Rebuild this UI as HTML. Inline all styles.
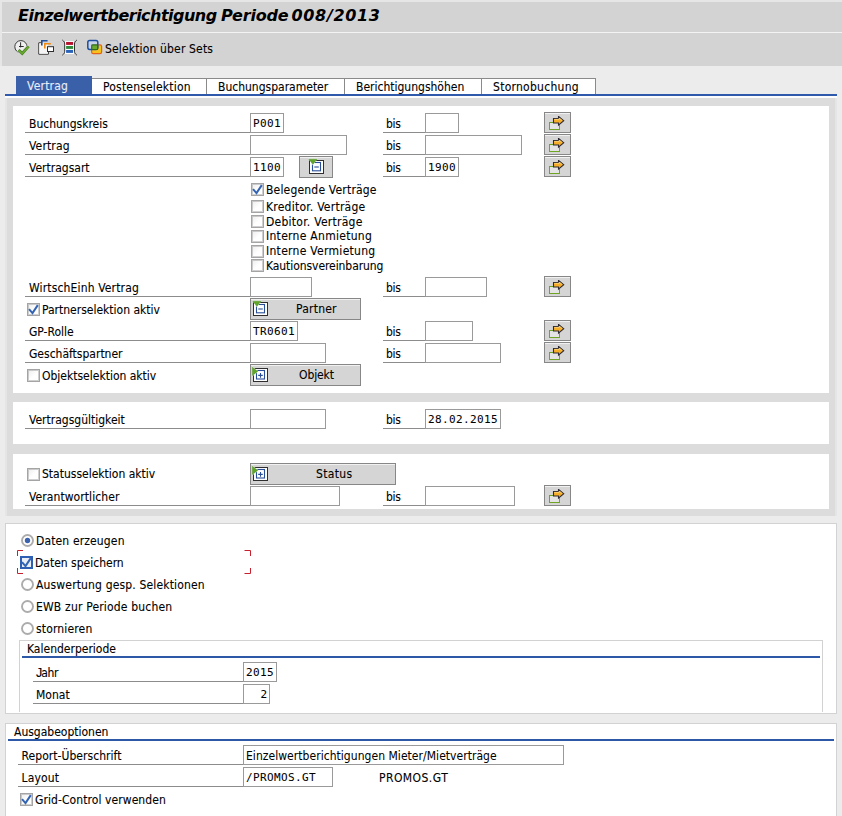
<!DOCTYPE html>
<html lang="de">
<head>
<meta charset="utf-8">
<title>Einzelwertberichtigung Periode 008/2013</title>
<style>
html,body{margin:0;padding:0;}
body{width:842px;height:816px;position:relative;overflow:hidden;background:#ececec;
 font-family:"DejaVu Sans Condensed","Liberation Sans",sans-serif;font-size:12px;color:#000;-webkit-text-stroke-width:0.1px;}
#root div,#root span,#root svg,#root i{position:absolute;white-space:nowrap;}
#titlebar{left:0;top:0;width:842px;height:32px;background:#d3d3d3;}
#title{left:18px;top:6px;font:italic bold 16px "DejaVu Sans","Liberation Sans",sans-serif;line-height:20px;-webkit-text-stroke-width:0;}
#title span{top:0;white-space:pre;}
#toolbar{left:0;top:33px;width:842px;height:33px;background:#d3d3d3;}
.t{line-height:14px;height:14px;}
.lbl{height:19px;border-bottom:1px solid #8c8c8c;line-height:19px;}
.lbl span{top:2px;}
.inp{box-sizing:border-box;height:20px;border:1px solid #9a9a9a;background:#fff;font:11px "DejaVu Sans Mono","Liberation Mono",monospace;letter-spacing:0.38px;line-height:18px;-webkit-text-stroke-width:0.05px;}
.inp span{left:2px;top:1px;}
.btn{box-sizing:border-box;background:#d5d5d5;border:1px solid #878787;box-shadow:inset 0 1px 0 #f1f1f1;}
.bt{top:0;line-height:20px;}
.white{background:#fff;}
.cb{box-sizing:border-box;width:13px;height:13px;border:1px solid #a4a4a4;background:linear-gradient(135deg,#ececec 0%,#fff 55%);box-shadow:inset 0 0 0 1px rgba(160,160,160,.5);}
.cbf{border:2px solid #2f5fb2;box-shadow:none;background:#e9eef7;}
.cbf svg{left:-2px !important;top:-2px !important;}
.tab{top:78px;height:16px;background:#fff;border-top:1px solid #8a8a8a;border-right:1px solid #8a8a8a;box-sizing:border-box;}
.tab span{left:11px;top:1px;line-height:15px;}
.tab.act{top:76px;height:18px;background:#3a60aa;border:none;color:#e8eefa;}
.tab.act span{left:11px;top:1px;line-height:19px;}
#tabline{left:5px;top:94px;width:832px;height:2px;background:#2f5aab;}
#tabstrip{left:5px;top:96px;width:832px;height:2px;background:#fcfcfc;}
#panel{left:5px;top:98px;width:832px;height:418px;background:#dcdcdc;box-sizing:border-box;border-left:2px solid #e5e5e5;border-right:2px solid #e5e5e5;}
.frame{box-sizing:border-box;background:#fff;border:1px solid #d2d2d2;}
.grp{box-sizing:border-box;border:1px solid #d2d2d2;border-bottom:none;}
.bl{height:2px;background:#2d57a7;}
#tbl{left:0;top:0;width:2px;height:66px;background:#e6e6e6;}
#tbt{left:0;top:0;width:842px;height:2px;background:#e6e6e6;}
#tbm{left:0;top:32px;width:842px;height:1px;background:#f3f3f3;}
.lbl em{font-style:normal;font-family:"Liberation Sans",sans-serif;font-size:12.5px;letter-spacing:-1.1px;}

</style>
</head>
<body>
<div id="root">
<div id="titlebar"><div id="title"><span style="left:0;letter-spacing:-0.515px">Einzelwertberichtigung </span><span style="left:203px;letter-spacing:-0.2px">Periode </span><span style="left:273.5px;letter-spacing:0.66px">008/2013</span></div></div>
<div id="toolbar">
<svg width="20" height="20" viewBox="0 0 20 20" style="left:12px;top:5px">
<circle cx="8.9" cy="8.7" r="6.1" fill="#efefef" stroke="#3a3a3a" stroke-width="1"/>
<path d="M8.6 4.3 V9.4 M7 8.5 H11.7" stroke="#2a2a2a" stroke-width="1" fill="none"/>
<path d="M6.6 12.1 L10.2 15.5 L16.6 8.4" fill="none" stroke="#d3d3d3" stroke-width="4"/>
<path d="M6.6 12.1 L10.2 15.5 L16.6 8.4" fill="none" stroke="#437f1c" stroke-width="2.7"/>
<path d="M6.6 12.1 L10.2 15.5 L16.6 8.4" fill="none" stroke="#6cab30" stroke-width="1.5"/>
</svg>
<svg width="20" height="20" viewBox="0 0 20 20" style="left:36px;top:5px">
<path d="M5.2 4.8 H2.8 V16.2 H12.4 V13.6" fill="#f6f6f6" stroke="#2e2e2e" stroke-width="1"/>
<rect x="3.3" y="5.3" width="8.6" height="10.4" fill="#f4f4f4"/>
<path d="M5.8 7.4 V2.8 H11.6" fill="none" stroke="#1f4e9c" stroke-width="1.6"/>
<path d="M8.8 10.6 V5.8 H14.8" fill="none" stroke="#f08a10" stroke-width="1.6"/>
<rect x="11.5" y="8.7" width="6" height="4.8" fill="#fff" stroke="#2e2e2e" stroke-width="1"/>
</svg>
<svg width="20" height="20" viewBox="0 0 20 20" style="left:60px;top:5px">
<rect x="5" y="3.2" width="9.2" height="12.8" fill="#fff"/>
<path d="M2.3 2 C4.2 3.4 4.7 4.4 4.7 6 V13.2 C4.7 14.8 4.2 15.8 2.3 17.2" fill="none" stroke="#333" stroke-width="1"/>
<path d="M16.9 2 C15 3.4 14.5 4.4 14.5 6 V13.2 C14.5 14.8 15 15.8 16.9 17.2" fill="none" stroke="#333" stroke-width="1"/>
<rect x="6.1" y="4" width="7" height="2.9" fill="#b5132d"/>
<rect x="6.1" y="8" width="7" height="2.9" fill="#2f8a3a"/>
<rect x="6.1" y="12" width="7" height="2.9" fill="#2a62b8"/>
</svg>
<svg width="20" height="20" viewBox="0 0 20 20" style="left:85px;top:5px">
<rect x="6.6" y="6.8" width="10" height="8.8" rx="1.6" fill="#f7c21c" stroke="#e0641a" stroke-width="1.2"/>
<rect x="2.8" y="2.6" width="10" height="8.8" rx="1.8" fill="#c8d2e8" stroke="#1f4f9f" stroke-width="1.5"/>
<rect x="6.7" y="6.9" width="6" height="4.6" rx="0.8" fill="#6aa82e" stroke="#2d6a1e" stroke-width="1.1"/>
</svg>
<div class="t" style="left:105px;top:9px;letter-spacing:0.16px">Selektion über Sets</div></div>
<div id="tbt"></div><div id="tbm"></div>
<div id="tbl"></div>
<div id="tabline"></div>
<div class="tab act" style="left:16px;width:76px"><span style="letter-spacing:0.2px">Vertrag</span></div>
<div class="tab" style="left:92px;width:115px"><span style="letter-spacing:0.19px;">Postenselektion</span></div>
<div class="tab" style="left:207px;width:138px"><span style="">Buchungsparameter</span></div>
<div class="tab" style="left:345px;width:137px"><span style="">Berichtigungshöhen</span></div>
<div class="tab" style="left:482px;width:114px"><span style="letter-spacing:0.27px;">Stornobuchung</span></div>
<div id="tabstrip"></div>
<div id="panel"></div>
<div class="white" style="left:13px;top:106px;width:816px;height:287px"></div>
<div class="white" style="left:13px;top:402px;width:816px;height:42px"></div>
<div class="white" style="left:13px;top:454px;width:816px;height:55px"></div>
<div class="lbl" style="left:25px;top:113px;width:225px"><span style="left:4px;">Buchungskreis</span></div>
<div class="inp " style="left:250px;top:113px;width:34px"><span>P001</span></div>
<div class="lbl" style="left:383px;top:113px;width:42px"><span style="left:3px;letter-spacing:-0.3px;">bis</span></div>
<div class="inp " style="left:425px;top:113px;width:34px"></div>
<div class="btn" style="left:544px;top:112px;width:27px;height:21px"><svg width="18" height="15" viewBox="0 0 18 15" style="left:3px;top:3px"><rect x="1.5" y="6.5" width="10" height="7" fill="#e4e4e4" stroke="#6ea524" stroke-width="1"/><path d="M5.5 2.5 H10.5 V0.4 L15.7 4.7 L10.5 9.1 V7 H5.5 Z" fill="#f6ae28" stroke="#2e2a33" stroke-width="1.1" stroke-linejoin="miter"/><path d="M6.3 3.4 H11.2 V2.2 L14.2 4.6" fill="none" stroke="#fbd277" stroke-width="0.9"/></svg></div>
<div class="lbl" style="left:25px;top:135px;width:225px"><span style="left:4px;letter-spacing:0.15px;">Vertrag</span></div>
<div class="inp " style="left:250px;top:135px;width:97px"></div>
<div class="lbl" style="left:383px;top:135px;width:42px"><span style="left:3px;letter-spacing:-0.3px;">bis</span></div>
<div class="inp " style="left:425px;top:135px;width:97px"></div>
<div class="btn" style="left:544px;top:134px;width:27px;height:21px"><svg width="18" height="15" viewBox="0 0 18 15" style="left:3px;top:3px"><rect x="1.5" y="6.5" width="10" height="7" fill="#e4e4e4" stroke="#6ea524" stroke-width="1"/><path d="M5.5 2.5 H10.5 V0.4 L15.7 4.7 L10.5 9.1 V7 H5.5 Z" fill="#f6ae28" stroke="#2e2a33" stroke-width="1.1" stroke-linejoin="miter"/><path d="M6.3 3.4 H11.2 V2.2 L14.2 4.6" fill="none" stroke="#fbd277" stroke-width="0.9"/></svg></div>
<div class="lbl" style="left:25px;top:157px;width:225px"><span style="left:4px;">Vertragsart</span></div>
<div class="inp " style="left:250px;top:157px;width:34px"><span>1100</span></div>
<div class="lbl" style="left:383px;top:157px;width:42px"><span style="left:3px;letter-spacing:-0.3px;">bis</span></div>
<div class="inp " style="left:425px;top:157px;width:34px"><span>1900</span></div>
<div class="btn" style="left:544px;top:156px;width:27px;height:21px"><svg width="18" height="15" viewBox="0 0 18 15" style="left:3px;top:3px"><rect x="1.5" y="6.5" width="10" height="7" fill="#e4e4e4" stroke="#6ea524" stroke-width="1"/><path d="M5.5 2.5 H10.5 V0.4 L15.7 4.7 L10.5 9.1 V7 H5.5 Z" fill="#f6ae28" stroke="#2e2a33" stroke-width="1.1" stroke-linejoin="miter"/><path d="M6.3 3.4 H11.2 V2.2 L14.2 4.6" fill="none" stroke="#fbd277" stroke-width="0.9"/></svg></div>
<div class="btn" style="left:299px;top:156px;width:34px;height:22px"><svg width="18" height="17" viewBox="0 0 18 17" style="left:8px;top:1px">
<rect x="1.5" y="2.5" width="14" height="13" fill="#fff" stroke="#2f2f2f" stroke-width="1"/>
<rect x="4.5" y="4.5" width="8" height="8.3" fill="#fff" stroke="#2a4f9a" stroke-width="1.1"/>
<path d="M6.3 9 H10.8" stroke="#2a4f9a" stroke-width="1.1"/>
<path d="M0.2 0.5 H9.6 L4.9 7.2 Z" fill="#fff"/>
<path d="M0.9 1.2 H8.9 L4.9 6.3 Z" fill="#5fa52a" stroke="#4a8a1f" stroke-width="0.5"/>
</svg></div>
<div class="cb" style="left:251px;top:183px"><svg class="ck" width="13" height="13" viewBox="0 0 13 13" style="left:-1px;top:-1px"><path d="M2 6.1 L5.5 10.1 L10.8 2.1" fill="none" stroke="#3364b4" stroke-width="2" stroke-linecap="butt"/></svg></div>
<div class="t" style="left:266px;top:183px;letter-spacing:0.19px;">Belegende Verträge</div>
<div class="cb" style="left:251px;top:200px"></div>
<div class="t" style="left:266px;top:200px;letter-spacing:0.24px;">Kreditor. Verträge</div>
<div class="cb" style="left:251px;top:215px"></div>
<div class="t" style="left:266px;top:215px;letter-spacing:0.26px;">Debitor. Verträge</div>
<div class="cb" style="left:251px;top:230px"></div>
<div class="t" style="left:266px;top:229px;letter-spacing:0.29px;">Interne Anmietung</div>
<div class="cb" style="left:251px;top:245px"></div>
<div class="t" style="left:266px;top:244px;letter-spacing:0.29px;">Interne Vermietung</div>
<div class="cb" style="left:251px;top:259px"></div>
<div class="t" style="left:266px;top:259px;letter-spacing:-0.07px;">Kautionsvereinbarung</div>
<div class="lbl" style="left:25px;top:277px;width:225px"><span style="left:4px;letter-spacing:0.15px;">WirtschEinh Vertrag</span></div>
<div class="inp " style="left:250px;top:277px;width:62px"></div>
<div class="lbl" style="left:383px;top:277px;width:42px"><span style="left:3px;letter-spacing:-0.3px;">bis</span></div>
<div class="inp " style="left:425px;top:277px;width:62px"></div>
<div class="btn" style="left:544px;top:276px;width:27px;height:21px"><svg width="18" height="15" viewBox="0 0 18 15" style="left:3px;top:3px"><rect x="1.5" y="6.5" width="10" height="7" fill="#e4e4e4" stroke="#6ea524" stroke-width="1"/><path d="M5.5 2.5 H10.5 V0.4 L15.7 4.7 L10.5 9.1 V7 H5.5 Z" fill="#f6ae28" stroke="#2e2a33" stroke-width="1.1" stroke-linejoin="miter"/><path d="M6.3 3.4 H11.2 V2.2 L14.2 4.6" fill="none" stroke="#fbd277" stroke-width="0.9"/></svg></div>
<div class="cb" style="left:27px;top:303px"><svg class="ck" width="13" height="13" viewBox="0 0 13 13" style="left:-1px;top:-1px"><path d="M2 6.1 L5.5 10.1 L10.8 2.1" fill="none" stroke="#3364b4" stroke-width="2" stroke-linecap="butt"/></svg></div>
<div class="t" style="left:42px;top:303px;">Partnerselektion aktiv</div>
<div class="btn" style="left:250px;top:298px;width:111px;height:22px"><svg width="18" height="17" viewBox="0 0 18 17" style="left:1px;top:1px">
<rect x="1.5" y="2.5" width="14" height="13" fill="#fff" stroke="#2f2f2f" stroke-width="1"/>
<rect x="4.5" y="4.5" width="8" height="8.3" fill="#fff" stroke="#2a4f9a" stroke-width="1.1"/>
<path d="M6.3 9 H10.8" stroke="#2a4f9a" stroke-width="1.1"/>
<path d="M0.2 0.5 H9.6 L4.9 7.2 Z" fill="#fff"/>
<path d="M0.9 1.2 H8.9 L4.9 6.3 Z" fill="#5fa52a" stroke="#4a8a1f" stroke-width="0.5"/>
</svg><span class="bt" style="left:45px;letter-spacing:0.23px">Partner</span></div>
<div class="lbl" style="left:25px;top:321px;width:225px"><span style="left:4px;">GP-Rolle</span></div>
<div class="inp " style="left:250px;top:321px;width:48px"><span>TR0601</span></div>
<div class="lbl" style="left:383px;top:321px;width:42px"><span style="left:3px;letter-spacing:-0.3px;">bis</span></div>
<div class="inp " style="left:425px;top:321px;width:48px"></div>
<div class="btn" style="left:544px;top:320px;width:27px;height:21px"><svg width="18" height="15" viewBox="0 0 18 15" style="left:3px;top:3px"><rect x="1.5" y="6.5" width="10" height="7" fill="#e4e4e4" stroke="#6ea524" stroke-width="1"/><path d="M5.5 2.5 H10.5 V0.4 L15.7 4.7 L10.5 9.1 V7 H5.5 Z" fill="#f6ae28" stroke="#2e2a33" stroke-width="1.1" stroke-linejoin="miter"/><path d="M6.3 3.4 H11.2 V2.2 L14.2 4.6" fill="none" stroke="#fbd277" stroke-width="0.9"/></svg></div>
<div class="lbl" style="left:25px;top:343px;width:225px"><span style="left:4px;">Geschäftspartner</span></div>
<div class="inp " style="left:250px;top:343px;width:76px"></div>
<div class="lbl" style="left:383px;top:343px;width:42px"><span style="left:3px;letter-spacing:-0.3px;">bis</span></div>
<div class="inp " style="left:425px;top:343px;width:76px"></div>
<div class="btn" style="left:544px;top:342px;width:27px;height:21px"><svg width="18" height="15" viewBox="0 0 18 15" style="left:3px;top:3px"><rect x="1.5" y="6.5" width="10" height="7" fill="#e4e4e4" stroke="#6ea524" stroke-width="1"/><path d="M5.5 2.5 H10.5 V0.4 L15.7 4.7 L10.5 9.1 V7 H5.5 Z" fill="#f6ae28" stroke="#2e2a33" stroke-width="1.1" stroke-linejoin="miter"/><path d="M6.3 3.4 H11.2 V2.2 L14.2 4.6" fill="none" stroke="#fbd277" stroke-width="0.9"/></svg></div>
<div class="cb" style="left:27px;top:369px"></div>
<div class="t" style="left:42px;top:369px;">Objektselektion aktiv</div>
<div class="btn" style="left:250px;top:364px;width:111px;height:22px"><svg width="18" height="17" viewBox="0 0 18 17" style="left:1px;top:1px">
<rect x="1.5" y="2.5" width="14" height="13" fill="#fff" stroke="#2f2f2f" stroke-width="1"/>
<rect x="4.5" y="4.5" width="8" height="8.5" fill="#fff" stroke="#2a4f9a" stroke-width="1.1"/>
<path d="M6.2 9.4 H10.8 M8.5 7.1 V11.7" stroke="#2a4f9a" stroke-width="1.1" fill="none"/>
<path d="M0 0.3 V10.5 L6.6 5.4 Z" fill="#fff"/>
<path d="M0.4 1.3 V9.5 L5.6 5.4 Z" fill="#5fa52a" stroke="#4a8a1f" stroke-width="0.5"/>
</svg><span class="bt" style="left:48px;letter-spacing:-0.1px">Objekt</span></div>
<div class="lbl" style="left:25px;top:409px;width:225px"><span style="left:4px;">Vertragsgültigkeit</span></div>
<div class="inp " style="left:250px;top:409px;width:76px"></div>
<div class="lbl" style="left:383px;top:409px;width:42px"><span style="left:3px;letter-spacing:-0.3px;">bis</span></div>
<div class="inp " style="left:425px;top:409px;width:76px"><span>28.02.2015</span></div>
<div class="cb" style="left:27px;top:468px"></div>
<div class="t" style="left:42px;top:467px;">Statusselektion aktiv</div>
<div class="btn" style="left:250px;top:463px;width:146px;height:22px"><svg width="18" height="17" viewBox="0 0 18 17" style="left:1px;top:1px">
<rect x="1.5" y="2.5" width="14" height="13" fill="#fff" stroke="#2f2f2f" stroke-width="1"/>
<rect x="4.5" y="4.5" width="8" height="8.5" fill="#fff" stroke="#2a4f9a" stroke-width="1.1"/>
<path d="M6.2 9.4 H10.8 M8.5 7.1 V11.7" stroke="#2a4f9a" stroke-width="1.1" fill="none"/>
<path d="M0 0.3 V10.5 L6.6 5.4 Z" fill="#fff"/>
<path d="M0.4 1.3 V9.5 L5.6 5.4 Z" fill="#5fa52a" stroke="#4a8a1f" stroke-width="0.5"/>
</svg><span class="bt" style="left:65px;letter-spacing:0.32px">Status</span></div>
<div class="lbl" style="left:25px;top:486px;width:225px"><span style="left:4px;letter-spacing:0.08px;">Verantwortlicher</span></div>
<div class="inp " style="left:250px;top:486px;width:90px"></div>
<div class="lbl" style="left:383px;top:486px;width:42px"><span style="left:3px;letter-spacing:-0.3px;">bis</span></div>
<div class="inp " style="left:425px;top:486px;width:90px"></div>
<div class="btn" style="left:544px;top:485px;width:27px;height:21px"><svg width="18" height="15" viewBox="0 0 18 15" style="left:3px;top:3px"><rect x="1.5" y="6.5" width="10" height="7" fill="#e4e4e4" stroke="#6ea524" stroke-width="1"/><path d="M5.5 2.5 H10.5 V0.4 L15.7 4.7 L10.5 9.1 V7 H5.5 Z" fill="#f6ae28" stroke="#2e2a33" stroke-width="1.1" stroke-linejoin="miter"/><path d="M6.3 3.4 H11.2 V2.2 L14.2 4.6" fill="none" stroke="#fbd277" stroke-width="0.9"/></svg></div>
<div class="frame" style="left:5px;top:523px;width:832px;height:191px"></div>
<svg class="rbs" width="13" height="13" viewBox="0 0 13 13" style="left:21px;top:534px"><circle cx="6.5" cy="6.5" r="5.5" fill="#fff" stroke="#acacac" stroke-width="1.9"/><circle cx="6.5" cy="6.5" r="2.7" fill="#3b63ad"/></svg>
<div class="t" style="left:36px;top:534px;letter-spacing:0.14px;">Daten erzeugen</div>
<div class="cb cbf" style="left:20px;top:556px"><svg class="ck" width="13" height="13" viewBox="0 0 13 13" style="left:-1px;top:-1px"><path d="M2 6.1 L5.5 10.1 L10.8 2.1" fill="none" stroke="#3364b4" stroke-width="2" stroke-linecap="butt"/></svg></div>
<div class="t" style="left:35px;top:556px;">Daten speichern</div>
<svg width="236" height="27" viewBox="0 0 236 27" style="left:16px;top:549px">
<path d="M7 1.5 H1.5 V7 M1.5 19 V24.5 H7 M228.5 1.5 H234.5 V7 M234.5 19 V24.5 H228.5" fill="none" stroke="#c8202e" stroke-width="1"/>
</svg>
<svg class="rbs" width="13" height="13" viewBox="0 0 13 13" style="left:21px;top:578px"><circle cx="6.5" cy="6.5" r="5.5" fill="#fff" stroke="#acacac" stroke-width="1.9"/></svg>
<div class="t" style="left:36px;top:578px;letter-spacing:0.16px;">Auswertung gesp. Selektionen</div>
<svg class="rbs" width="13" height="13" viewBox="0 0 13 13" style="left:21px;top:600px"><circle cx="6.5" cy="6.5" r="5.5" fill="#fff" stroke="#acacac" stroke-width="1.9"/></svg>
<div class="t" style="left:36px;top:600px;letter-spacing:0.18px;">EWB zur Periode buchen</div>
<svg class="rbs" width="13" height="13" viewBox="0 0 13 13" style="left:21px;top:622px"><circle cx="6.5" cy="6.5" r="5.5" fill="#fff" stroke="#acacac" stroke-width="1.9"/></svg>
<div class="t" style="left:36px;top:622px;letter-spacing:0.16px;">stornieren</div>
<div class="grp" style="left:19px;top:640px;width:804px;height:72px"></div>
<div class="t" style="left:27px;top:642px;">Kalenderperiode</div>
<div class="bl" style="left:22px;top:656px;width:798px"></div>
<div class="lbl" style="left:33px;top:662px;width:210px"><span style="left:3px;letter-spacing:-0.3px"><em>J</em>ahr</span></div>
<div class="inp " style="left:243px;top:662px;width:34px"><span>2015</span></div>
<div class="lbl" style="left:33px;top:684px;width:210px"><span style="left:3px;">Monat</span></div>
<div class="inp " style="left:243px;top:684px;width:27px"><span style="right:1.4px;left:auto">2</span></div>
<div class="frame" style="left:5px;top:723px;width:832px;height:100px"></div>
<div class="t" style="left:14px;top:725px;">Ausgabeoptionen</div>
<div class="bl" style="left:8px;top:739px;width:826px"></div>
<div class="lbl" style="left:18px;top:745px;width:225px"><span style="left:3.6px;letter-spacing:0.04px;">Report-Überschrift</span></div>
<div class="inp" style="left:243px;top:745px;width:321px;font:12px 'DejaVu Sans Condensed','Liberation Sans',sans-serif;letter-spacing:0.045px;line-height:18px"><span>Einzelwertberichtigungen Mieter/Mietverträge</span></div>
<div class="lbl" style="left:18px;top:767px;width:225px"><span style="left:3.6px;letter-spacing:0.12px;">Layout</span></div>
<div class="inp " style="left:243px;top:767px;width:90px"><span>/PROMOS.GT</span></div>
<div class="t" style="left:379px;top:771px;letter-spacing:0.45px;">PROMOS.GT</div>
<div class="cb" style="left:20px;top:793px"><svg class="ck" width="13" height="13" viewBox="0 0 13 13" style="left:-1px;top:-1px"><path d="M2 6.1 L5.5 10.1 L10.8 2.1" fill="none" stroke="#3364b4" stroke-width="2" stroke-linecap="butt"/></svg></div>
<div class="t" style="left:35px;top:793px;letter-spacing:0.08px;">Grid-Control verwenden</div>
</div>
</body>
</html>
